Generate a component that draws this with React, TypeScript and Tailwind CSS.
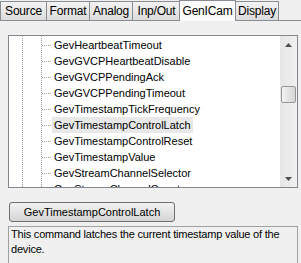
import * as React from "react";

const tabs = [
  { label: "Source", w: "w-[47px]" },
  { label: "Format", w: "w-[44px]" },
  { label: "Analog", w: "w-[44px]" },
  { label: "Inp/Out", w: "w-[49px]" },
];

const rows = [
  "GevHeartbeatTimeout",
  "GevGVCPHeartbeatDisable",
  "GevGVCPPendingAck",
  "GevGVCPPendingTimeout",
  "GevTimestampTickFrequency",
  "GevTimestampControlLatch",
  "GevTimestampControlReset",
  "GevTimestampValue",
  "GevStreamChannelSelector",
  "GevStreamChannelCount",
];

const selected = "GevTimestampControlLatch";

function TreeRow({ label }: { label: string }) {
  const isSel = label === selected;
  return (
    <div className="relative flex h-[16px] shrink-0 items-center">
      {/* horizontal connector */}
      <div className="absolute left-[33px] top-[8px] w-[9px] border-t border-dotted border-[#a0a0a0]" />
      <span
        className={`ml-[43px] px-[2px] leading-[16px] ${isSel ? "bg-[#e8e8e8]" : ""}`}
      >
        {label}
      </span>
    </div>
  );
}

export default function App() {
  return (
    <div
      className="relative h-[263px] w-[301px] overflow-hidden bg-[#f0f0f0] text-[11px] text-black"
      style={{ fontFamily: "Tahoma, 'Liberation Sans', Arial, sans-serif" }}
    >
      {/* Tab strip */}
      <div className="relative flex h-[21px] items-end border-b border-[#898c95] text-[12px] tracking-[-0.2px]">
        {tabs.map((t) => (
          <div
            key={t.label}
            className={`${t.w} -mr-px flex h-[19px] shrink-0 items-center justify-center border border-b-0 border-[#898c95] bg-gradient-to-b from-[#f3f3f3] to-[#dcdcdc] pb-[1px]`}
          >
            {t.label}
          </div>
        ))}
        <div className="relative z-10 -mb-px -ml-px flex h-[21px] w-[57px] shrink-0 items-start justify-center border border-b-0 border-[#898c95] bg-[#fbfbfb] pt-[1px]">
          GenICam
        </div>
        <div className="-ml-px flex h-[19px] w-[44px] shrink-0 items-center justify-center border border-b-0 border-[#898c95] bg-gradient-to-b from-[#f3f3f3] to-[#dcdcdc] pb-[1px]">
          Display
        </div>
      </div>

      {/* Tree view */}
      <div className="ml-[8px] mt-[14px] flex h-[153px] w-[290px] border border-[#828790] bg-white">
        <div className="relative flex flex-1 flex-col overflow-hidden pt-[1px]">
          <div className="absolute bottom-0 left-[13px] top-0 border-l border-dotted border-[#a0a0a0]" />
          <div className="absolute bottom-0 left-[32px] top-0 border-l border-dotted border-[#a0a0a0]" />
          {rows.map((r) => (
            <TreeRow key={r} label={r} />
          ))}
        </div>
        {/* Scrollbar */}
        <div className="flex w-[17px] shrink-0 flex-col items-center bg-gradient-to-r from-[#e6e6e6] to-[#f0f0f0]">
          <div className="flex h-[17px] w-full items-center justify-center">
            <svg width="7" height="4" viewBox="0 0 7 4">
              <path d="M0 4 L3.5 0 L7 4 Z" fill="#4d4d4d" />
            </svg>
          </div>
          <div className="mt-[33px] h-[17px] w-[15px] rounded-[2px] border border-[#979797] bg-gradient-to-r from-[#f2f2f2] to-[#d6d6d6]" />
          <div className="flex-1" />
          <div className="flex h-[17px] w-full items-center justify-center">
            <svg width="7" height="4" viewBox="0 0 7 4">
              <path d="M0 0 L3.5 4 L7 0 Z" fill="#4d4d4d" />
            </svg>
          </div>
        </div>
      </div>

      {/* Command button */}
      <button className="ml-[9px] mt-[14px] flex h-[20px] w-[166px] items-center justify-center rounded-[3px] border border-[#707070] bg-gradient-to-b from-[#f2f2f2] to-[#d5d5d5] text-[11px]">
        GevTimestampControlLatch
      </button>

      {/* Description */}
      <div className="ml-[8px] mt-[4px] h-[50px] w-[290px] border border-[#a0a0a0] px-[2px] leading-[15px] tracking-[-0.2px]">
        This command latches the current timestamp value of the device.
      </div>
    </div>
  );
}
